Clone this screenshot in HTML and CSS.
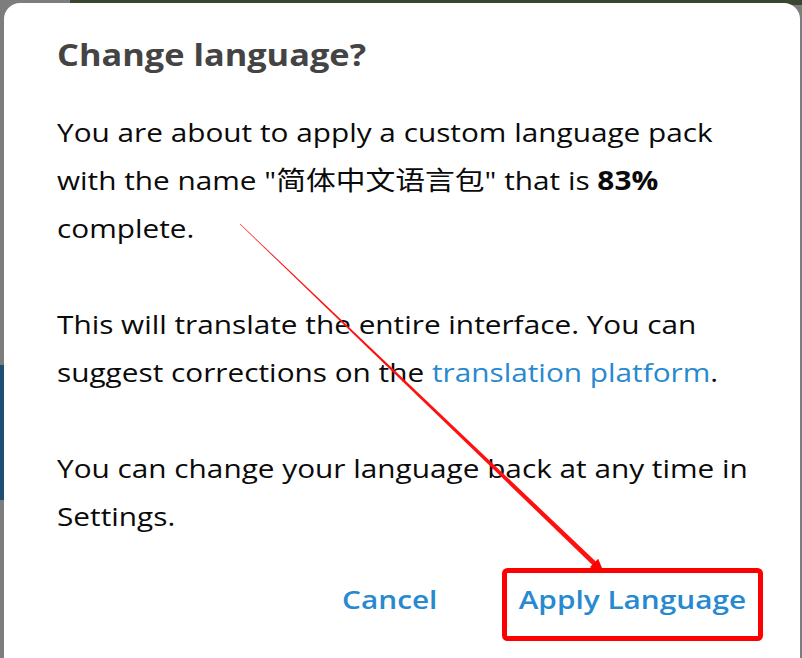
FILE: index.html
```html
<!DOCTYPE html>
<html>
<head>
<meta charset="utf-8">
<link rel="stylesheet" href="styles.css">
</head>
<body>
<div class="backdrop">
  <div class="topstrip"></div>
  <div class="leftstrip"></div>
  <div class="dialog">
    <div class="content">
      <h1 class="title">Change language?</h1>
      <p class="para">You are about to apply a custom language pack with the name "简体中文语言包" that is <b>83%</b> complete.</p>
      <p class="para">This will translate the entire interface. You can suggest corrections on the <a class="link">translation platform</a>.</p>
      <p class="para">You can change your language back at any time in Settings.</p>
      <div class="actions">
        <span class="btn">Cancel</span>
        <span class="btn">Apply Language</span>
      </div>
    </div>
  </div>
  <svg class="annot" width="802" height="658" viewBox="0 0 802 658">
    <polygon points="239.6,224 240.4,224 598.7,564.2 595.3,567.8" fill="#ff1010"/>
    <polygon points="589.8,567.3 598.2,558.7 604,573" fill="#ff0000"/>
    <rect x="504.5" y="570.5" width="256" height="68" rx="3" fill="none" stroke="#ff0000" stroke-width="5"/>
  </svg>
</div>
</body>
</html>
```
FILE: styles.css
```css
html, body {
  margin: 0;
  padding: 0;
  background: #7d7d7d;
  overflow: hidden;
}
.backdrop {
  position: relative;
  width: 802px;
  height: 658px;
  display: flex;
  padding-left: 4px;
  padding-top: 3px;
  box-sizing: border-box;
}
.topstrip {
  position: absolute;
  left: 70px;
  top: 0;
  width: 732px;
  height: 5px;
  background: #3b4630;
}
.leftstrip {
  position: absolute;
  left: 0;
  top: 365px;
  width: 4px;
  height: 135px;
  background: #1d4e73;
}
.dialog {
  position: relative;
  z-index: 1;
  width: 796px;
  background: #fff;
  border-radius: 16px 16px 0 0;
  padding: 0 0 0 53px;
  box-sizing: border-box;
  font-family: "Open Sans", "Noto Sans CJK SC", sans-serif;
}
.content {
  width: 625px;
  transform: scaleX(1.145);
  transform-origin: 0 0;
}
.title {
  margin: 32px 0 0 0;
  font-size: 30px;
  font-weight: 700;
  color: #444;
  line-height: 40px;
}
.para {
  margin: 0;
  font-size: 26px;
  line-height: 48px;
  color: #0a0a0a;
}
.title + .para { margin-top: 33px; }
.para + .para { margin-top: 48px; }
.para b { font-weight: 700; }
.link { color: #2789cf; }
.actions {
  display: flex;
  margin-top: 39px;
  padding-left: 249px;
  gap: 71px;
}
.btn {
  font-size: 26px;
  font-weight: 600;
  color: #2789cf;
  line-height: 40px;
}
.annot {
  position: absolute;
  left: 0;
  top: 0;
  z-index: 2;
}
```
